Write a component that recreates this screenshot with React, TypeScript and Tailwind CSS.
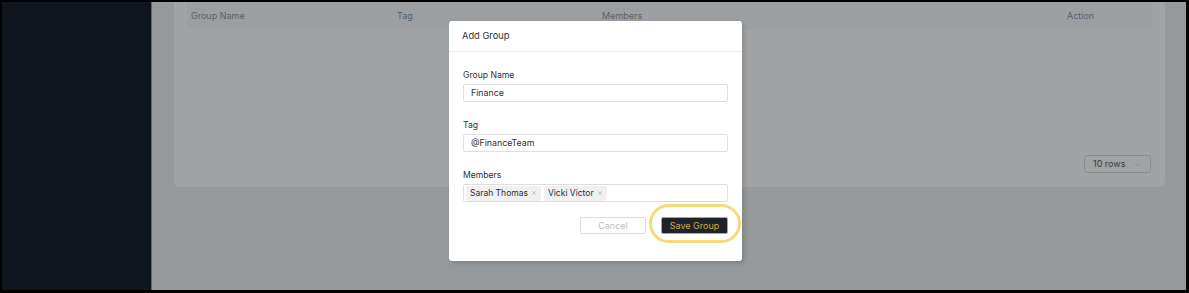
import { ChevronDown, X } from "lucide-react";

const columns = [
  { label: "Group Name", w: "w-[206px]" },
  { label: "Tag", w: "w-[205px]" },
  { label: "Members", w: "flex-1" },
  { label: "Action", w: "w-[89px]" },
];

function Field({ label, children }: { label: string; children: React.ReactNode }) {
  return (
    <div className="flex flex-col gap-[3px]">
      <label className="text-[8.6px] leading-[12px] text-[#2b2f36]">{label}</label>
      {children}
    </div>
  );
}

function Chip({ name }: { name: string }) {
  return (
    <span className="flex h-[15px] items-center gap-[3px] rounded-[2px] bg-[#f0f0f0] px-[4px] text-[8.5px] text-[#2b2f36]">
      {name}
      <X className="h-[6px] w-[6px] text-[#9a9a9a]" strokeWidth={2} />
    </span>
  );
}

export default function App() {
  return (
    <div
      className="flex h-[293px] w-[1189px] border-t-2 border-b-[3px] border-l-2 border-r-[3px] border-black"
      style={{ fontFamily: "Inter, 'Liberation Sans', sans-serif" }}
    >
      {/* Sidebar */}
      <div className="w-[150px] flex-shrink-0 border-r border-[#5f6469] bg-[#0f161e]" />

      {/* Main (dimmed by modal overlay) */}
      <div className="relative flex-1 bg-[#96999b]">
        <div className="ml-[22px] mr-[21px] rounded-b-[6px] bg-[#a1a2a3] px-[13px] pb-[14px]">
          <div className="flex h-[27px] items-center bg-[#9b9fa1] text-[9px] text-[#5c6068]">
            {columns.map((c) => (
              <div key={c.label} className={`${c.w} pl-[4px]`}>
                {c.label}
              </div>
            ))}
          </div>
          <div className="h-[126px]" />
          <div className="flex justify-end pr-[1px]">
            <div className="flex h-[18px] w-[67px] items-center justify-between rounded-[3px] border border-[#8a8d90] px-[8px] text-[9px] text-[#3a3d42]">
              10 rows
              <ChevronDown className="h-[9px] w-[9px] text-[#74777b]" strokeWidth={1.5} />
            </div>
          </div>
        </div>

        {/* Modal */}
        <div className="absolute left-[297px] top-[19px] w-[293px] rounded-[3px] bg-white shadow-[2px_2px_4px_rgba(0,0,0,0.15)]">
          <div className="flex h-[31px] items-center border-b border-[#ececec] px-[13px] text-[9.3px] text-[#2b2f36]">
            Add Group
          </div>
          <div className="flex flex-col gap-[17px] px-[14px] pt-[17px]">
            <Field label="Group Name">
              <div className="flex h-[18px] items-center rounded-[2px] border border-[#dedede] px-[7px] text-[8.8px] text-[#2b2f36]">
                Finance
              </div>
            </Field>
            <Field label="Tag">
              <div className="flex h-[18px] items-center rounded-[2px] border border-[#dedede] px-[7px] text-[8.8px] text-[#2b2f36]">
                @FinanceTeam
              </div>
            </Field>
            <Field label="Members">
              <div className="flex h-[18px] items-center gap-[3px] rounded-[2px] border border-[#dedede] px-[2px]">
                <Chip name="Sarah Thomas" />
                <Chip name="Vicki Victor" />
              </div>
            </Field>
          </div>
          <div className="flex items-start justify-end gap-[15px] px-[14px] pb-[27px] pt-[15px]">
            <button className="h-[17px] w-[66px] rounded-[2px] border border-[#dcdcdc] bg-white text-[9px] text-[#bdbdbd]">
              Cancel
            </button>
            <div className="relative flex">
              <button className="h-[17px] w-[67px] rounded-[2px] border border-[#c9a441] bg-[#1d232b] text-[9px] text-[#d9a63b]">
                Save Group
              </button>
              <div className="pointer-events-none absolute -left-[12px] -right-[13px] -top-[13px] -bottom-[9px] rounded-full border-[3px] border-[#f9d77b]" />
            </div>
          </div>
        </div>
      </div>
    </div>
  );
}
